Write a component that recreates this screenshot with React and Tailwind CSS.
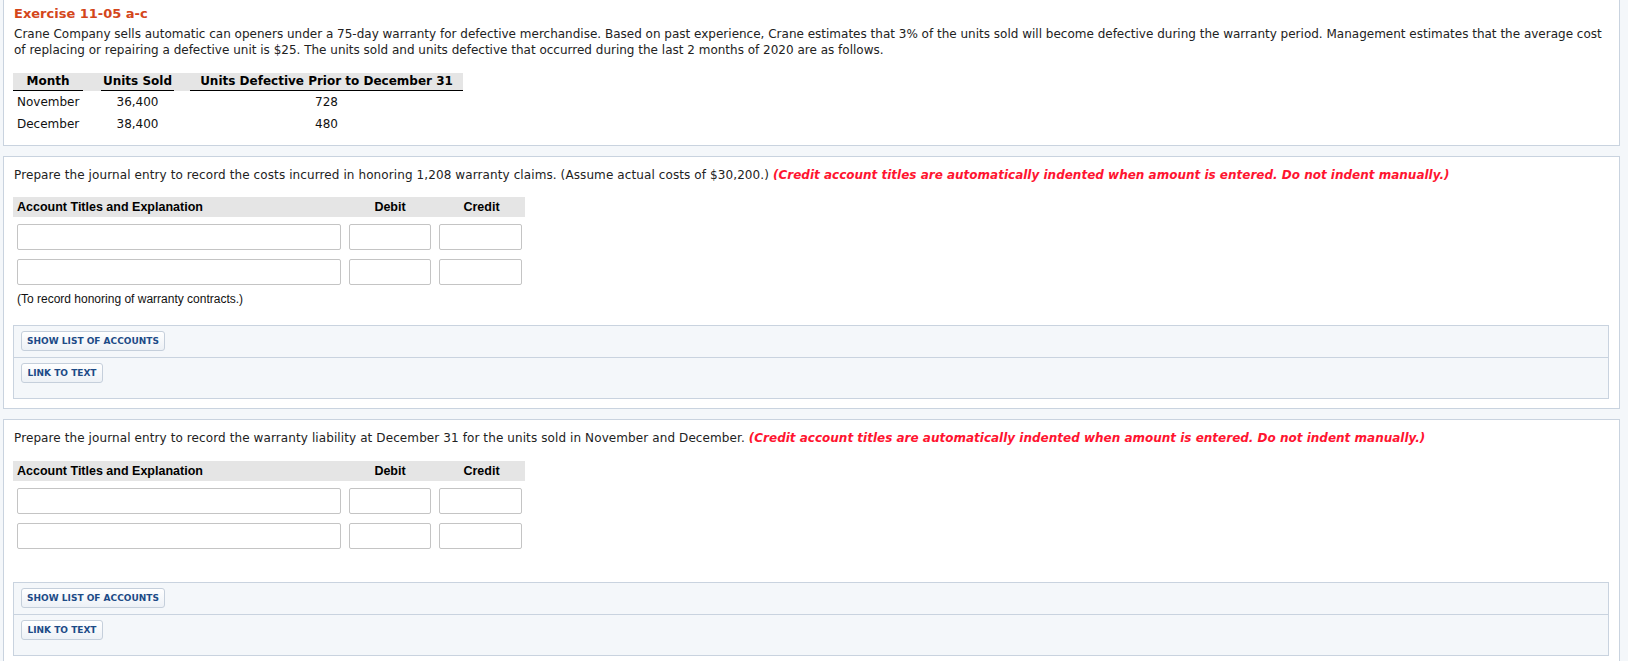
import React from "react";

const verdana = { fontFamily: '"DejaVu Sans", Verdana, sans-serif' };
const tahoma = { fontFamily: '"Liberation Sans", Arial, sans-serif' };

function Btn({ children, w }) {
  return (
    <button
      className={`h-[20px] ${w} whitespace-nowrap rounded-[3px] border border-[#c5cfdb] bg-gradient-to-b from-white to-[#edf1f6] text-[9px] font-bold leading-[18px] text-[#1d4b87] text-center`}
      style={verdana}
    >
      {children}
    </button>
  );
}

function ToolBox() {
  return (
    <div className="ml-[9px] mr-[10px] border border-[#c9d3df] bg-[#f4f7fa]">
      <div className="flex pl-[7px] pt-[5px] pb-[6px] border-b border-[#c9d3df]">
        <Btn w="w-[144px]">SHOW LIST OF ACCOUNTS</Btn>
      </div>
      <div className="flex pl-[7px] pt-[5px] pb-[15px]">
        <Btn w="w-[82px]">LINK TO TEXT</Btn>
      </div>
    </div>
  );
}

function Input({ w }) {
  return <div className={`h-[26px] ${w} rounded-[2px] border border-[#c4c4c4] bg-white`} />;
}

function EntryTable() {
  return (
    <div className="ml-[9px] w-[512px]">
      <div className="flex h-[20px] items-center bg-[#e5e5e5] text-[12.5px] font-bold text-black" style={tahoma}>
        <div className="w-[332px] pl-[4px]">Account Titles and Explanation</div>
        <div className="w-[90px] text-center">Debit</div>
        <div className="w-[90px] pl-[3px] text-center">Credit</div>
      </div>
      <div className="mt-[7px] flex flex-col gap-[9px]">
        {[0, 1].map((i) => (
          <div key={i} className="flex">
            <div className="w-[332px] pl-[4px]">
              <Input w="w-[324px]" />
            </div>
            <div className="w-[90px] pl-[4px]">
              <Input w="w-[82px]" />
            </div>
            <div className="w-[90px] pl-[4px]">
              <Input w="w-[83px]" />
            </div>
          </div>
        ))}
      </div>
    </div>
  );
}

function RedNote() {
  return (
    <span className="text-[12px] font-bold italic tracking-normal text-[#ff1430]" style={verdana}>
      (Credit account titles are automatically indented when amount is entered. Do not indent manually.)
    </span>
  );
}

export default function App() {
  return (
    <div className="min-h-screen bg-[#f4f7fa] pl-[3px] pr-[8px] text-[#222]" style={verdana}>
      {/* Panel 1 */}
      <div className="border border-t-0 border-[#c9d3df] bg-white pt-[6px] pb-[10px]">
        <div className="pl-[10px] text-[13px] font-bold leading-[16px] text-[#d4461b]">Exercise 11-05 a-c</div>
        <p className="mt-[4px] pl-[10px] pr-[8px] text-[12px] leading-[16px] text-[#222]">
          Crane Company sells automatic can openers under a 75-day warranty for defective merchandise. Based on past
          experience, Crane estimates that 3% of the units sold will become defective during the warranty period.
          Management estimates that the average cost of replacing or repairing a defective unit is $25. The units sold
          and units defective that occurred during the last 2 months of 2020 are as follows.
        </p>
        <div className="mt-[15px] ml-[9px] w-[450px] text-[12px]">
          <div className="flex h-[18px] whitespace-nowrap bg-[#e5e5e5] text-[12px] font-bold text-black">
            <div className="w-[70px] border-b border-black text-center leading-[17px]">Month</div>
            <div className="w-[18px]" />
            <div className="w-[73px] border-b border-black text-center leading-[17px]">Units Sold</div>
            <div className="w-[16px]" />
            <div className="w-[273px] border-b border-black text-center leading-[17px]">
              Units Defective Prior to December 31
            </div>
          </div>
          {[
            ["November", "36,400", "728"],
            ["December", "38,400", "480"],
          ].map((r) => (
            <div key={r[0]} className="flex h-[22px] items-center text-[#111]">
              <div className="w-[88px] pl-[4px]">{r[0]}</div>
              <div className="w-[73px] text-center">{r[1]}</div>
              <div className="w-[16px]" />
              <div className="w-[273px] text-center">{r[2]}</div>
            </div>
          ))}
        </div>
      </div>

      {/* Panel 2 */}
      <div className="mt-[10px] border border-[#c9d3df] bg-white pt-[10px] pb-[9px]">
        <p className="pl-[10px] text-[12px] leading-[16px] tracking-[0.1px] text-[#222]">
          Prepare the journal entry to record the costs incurred in honoring 1,208 warranty claims. (Assume actual costs
          of $30,200.) <RedNote />
        </p>
        <div className="mt-[14px]">
          <EntryTable />
        </div>
        <div className="mt-[6px] pl-[13px] text-[12px] leading-[16px] text-[#111]" style={tahoma}>
          (To record honoring of warranty contracts.)
        </div>
        <div className="mt-[18px]">
          <ToolBox />
        </div>
      </div>

      {/* Panel 3 */}
      <div className="mt-[10px] border border-[#c9d3df] bg-white pt-[10px] pb-[9px]">
        <p className="pl-[10px] text-[12px] leading-[16px] tracking-[0.1px] text-[#222]">
          Prepare the journal entry to record the warranty liability at December 31 for the units sold in November and
          December. <RedNote />
        </p>
        <div className="mt-[15px]">
          <EntryTable />
        </div>
        <div className="mt-[33px]">
          <ToolBox />
        </div>
      </div>
    </div>
  );
}
